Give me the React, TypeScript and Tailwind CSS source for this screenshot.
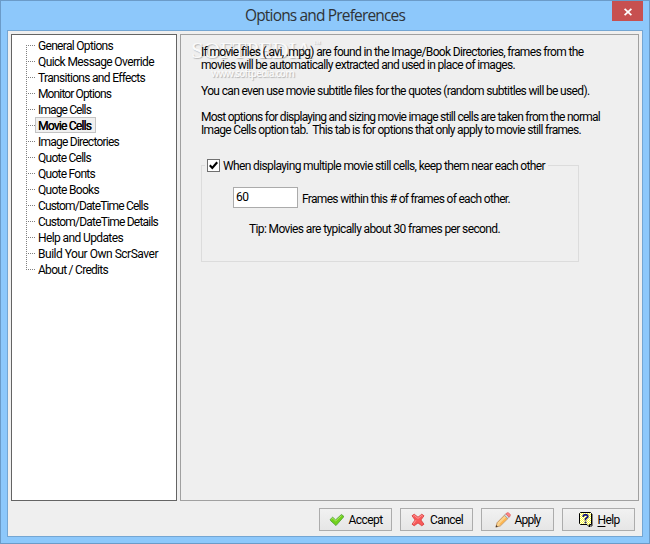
import { ReactNode, useLayoutEffect, useRef, useState } from 'react'

interface FitProps {
  text: string
  width: number
  className?: string
  children?: ReactNode
}

interface Section {
  label: string
  width: number
}

const sections: Section[] = [
  { label: 'General Options', width: 75 },
  { label: 'Quick Message Override', width: 116 },
  { label: 'Transitions and Effects', width: 107 },
  { label: 'Monitor Options', width: 73 },
  { label: 'Image Cells', width: 53 },
  { label: 'Movie Cells', width: 53 },
  { label: 'Image Directories', width: 81 },
  { label: 'Quote Cells', width: 53 },
  { label: 'Quote Fonts', width: 57 },
  { label: 'Quote Books', width: 61 },
  { label: 'Custom/DateTime Cells', width: 110 },
  { label: 'Custom/DateTime Details', width: 120 },
  { label: 'Help and Updates', width: 85 },
  { label: 'Build Your Own ScrSaver', width: 120 },
  { label: 'About / Credits', width: 70 },
]

// tracks a line of text so it takes exactly the given width
function Fit({ text, width, className = '', children }: FitProps) {
  const ref = useRef<HTMLSpanElement>(null)
  const [spacing, setSpacing] = useState(0)

  useLayoutEffect(() => {
    if (!ref.current) return
    const natural = ref.current.getBoundingClientRect().width
    setSpacing((width - natural) / text.length)
  }, [text, width])

  return (
    <span ref={ref} className={`inline-block whitespace-pre ${className}`} style={{ letterSpacing: spacing }}>
      {children ?? text}
    </span>
  )
}

export default function App() {
  const [active, setActive] = useState('Movie Cells')
  const [nearby, setNearby] = useState(true)
  const [frames, setFrames] = useState('60')

  return (
    <div className="flex h-[544px] w-[650px] flex-col border border-[#6b9bc8] bg-[#8dc8fb] px-[6px] pb-[6px] font-['Roboto','Liberation_Sans',sans-serif] text-[12px] text-black">
      <TitleBar />
      <div className="flex flex-1 flex-col border border-[#74a6d3] bg-[#efefef] p-[3px]">
        <div className="flex h-[467px] gap-[3px]">
          <nav className="w-[166px] border border-[#646464] bg-white pl-[14px] pt-[2px]">
            {sections.map((s, i) => (
              <TreeItem
                key={s.label}
                section={s}
                first={i === 0}
                last={i === sections.length - 1}
                active={s.label === active}
                onClick={() => setActive(s.label)}
              />
            ))}
          </nav>

          <main className="relative w-[459px] border border-[#a0a0a0] pl-[20px] pt-[11px]">
            <Watermark />
            <div className="relative leading-[13px]">
              <div className="h-[26px] flex flex-col items-start">
                <Fit width={382} text="If movie files (.avi, .mpg) are found in the Image/Book Directories, frames from the" />
                <Fit width={314} text="movies will be automatically extracted and used in place of images." />
              </div>
              <div className="mt-[13px] h-[13px] flex">
                <Fit width={388} text="You can even use movie subtitle files for the quotes (random subtitles will be used)." />
              </div>
              <div className="mt-[13px] h-[26px] flex flex-col items-start">
                <Fit width={399} text="Most options for displaying and sizing movie image still cells are taken from the normal" />
                <Fit width={380} text="Image Cells option tab.  This tab is for options that only apply to movie still frames." />
              </div>
            </div>

            {/* group box, label sits on the top edge */}
            <fieldset className="mt-[21px] h-[104px] w-[378px] border border-[#dcdcdc]">
              <legend className="ml-[3px] flex h-[15px] items-center pl-[2px] pr-[3px] leading-[15px]">
                <button
                  onClick={() => setNearby(!nearby)}
                  className="mr-[3px] flex h-[13px] w-[13px] items-center justify-center border border-[#707070] bg-white"
                >
                  {nearby && <CheckMark />}
                </button>
                <Fit className="mt-[2px]" width={322} text="When displaying multiple movie still cells, keep them near each other" />
              </legend>
              <div className="ml-[31px] mt-[14px] flex h-[21px] items-center">
                <input
                  value={frames}
                  onChange={(e) => setFrames(e.target.value)}
                  className="h-[21px] w-[65px] border border-[#ababab] bg-white pb-[1px] pl-[2px] tracking-[-0.4px] outline-none"
                />
                <Fit className="ml-[4px] mt-[3px]" width={208} text="Frames within this # of frames of each other." />
              </div>
              <div className="ml-[47px] mt-[13px] leading-[16px]">
                <Fit width={251} text="Tip: Movies are typically about 30 frames per second." />
              </div>
            </fieldset>
          </main>
        </div>

        <footer className="mt-[7px] flex justify-end gap-[8px] pr-[4px]">
          <ActionButton icon={<AcceptIcon />} text="Accept" width={34} gap="ml-[4px]" />
          <ActionButton icon={<CancelIcon />} text="Cancel" width={33} gap="ml-[4px]" />
          <ActionButton icon={<PencilIcon />} text="Apply" width={26} gap="ml-[4px]" />
          <ActionButton icon={<HelpIcon />} text="Help" width={22} gap="ml-[4px]">
            <span className="underline underline-offset-2">H</span>elp
          </ActionButton>
        </footer>
      </div>
    </div>
  )
}

function TitleBar() {
  return (
    <header className="relative flex h-[29px] justify-center font-['Open_Sans',sans-serif] text-[15.5px] leading-[29px] text-[#2f3337]">
      <Fit width={160} text="Options and Preferences" />
      <button className="absolute right-0 top-0 flex h-[20px] w-[31px] items-center justify-center bg-[#c75050]">
        <svg className="mt-[2px] h-[8px] w-[8px]" viewBox="0 0 8 8" fill="none" stroke="white" strokeWidth="1.7">
          <path d="M.6 .8 7.4 7.2M7.4 .8 .6 7.2" />
        </svg>
      </button>
    </header>
  )
}

interface TreeItemProps {
  section: Section
  first: boolean
  last: boolean
  active: boolean
  onClick: () => void
}

function TreeItem({ section, first, last, active, onClick }: TreeItemProps) {
  return (
    <button onClick={onClick} className="flex h-[16px] items-center text-left">
      <svg className="h-[16px] w-[9px] shrink-0" viewBox="0 0 9 16" stroke="#808080" strokeDasharray="1 1" shapeRendering="crispEdges">
        <path d={`M.5 ${first ? 8 : 0}V${last ? 9 : 16}`} />
        <path d="M0 8.5H9" />
      </svg>
      <span
        className={`flex h-[16px] items-center border pl-[2px] pr-[4px] leading-[14px] ${active ? 'border-[#c4c4c4] bg-[#f0f0f0] [text-shadow:0.35px_0_0_black]' : 'border-transparent'}`}
      >
        <Fit className="mt-[2px]" width={section.width} text={section.label} />
      </span>
    </button>
  )
}

interface ActionButtonProps {
  icon: ReactNode
  text: string
  width: number
  gap: string
  children?: ReactNode
}

function ActionButton({ icon, text, width, gap, children }: ActionButtonProps) {
  return (
    <button className="flex h-[23px] w-[73px] items-center justify-center border border-[#acacac] bg-linear-to-b from-[#f1f1f1] to-[#e6e6e6] leading-[15px]">
      {icon}
      <Fit className={`${gap} mt-[2px]`} width={width} text={text}>{children}</Fit>
    </button>
  )
}

function Watermark() {
  return (
    <div className="pointer-events-none absolute left-[10px] top-[2px] text-[#fafafa] [text-shadow:1px_1px_1px_#b4b4b4]">
      <div className="flex h-[27px] items-start font-['Liberation_Serif',serif] text-[23px] leading-[27px]">
        <Fit width={121} text="SOFTPEDIA" />
        <span className="ml-[1px] mt-[1px] text-[8px] leading-[12px]">™</span>
      </div>
      <div className="ml-[20px] font-['Open_Sans',sans-serif] text-[10px] font-semibold leading-[18px]">
        <Fit width={83} text="www.softpedia.com" />
      </div>
    </div>
  )
}

function CheckMark() {
  return (
    <svg className="h-[11px] w-[11px]" viewBox="0 0 11 11">
      <path fill="none" stroke="black" strokeWidth="2.1" d="M1.8 5.2 4.3 7.9 9.2 2.2" />
    </svg>
  )
}

function AcceptIcon() {
  return (
    <svg className="h-[16px] w-[16px]" viewBox="0 0 16 16">
      <path fill="#72d11b" stroke="#4d9e35" strokeWidth=".8" strokeLinejoin="round" d="M1.2 7.4 3.7 5.2 6.6 7.9 12.4 2.5 14.6 4.1 14.4 5.2 7 13.6 1.6 8.7Z" />
      <path fill="none" stroke="#b6ee72" strokeWidth=".8" d="M2.4 7.3 3.8 6.2 6.6 9 12.5 3.6" />
    </svg>
  )
}

function CancelIcon() {
  return (
    <svg className="h-[16px] w-[16px]" viewBox="0 0 16 16">
      <path fill="#f85a5a" stroke="#d53838" strokeWidth=".8" strokeLinejoin="round" d="M2 3.8 4.2 2.2 8 5.2 11.8 2.2 14 3.8 10.9 8 14 12.2 11.8 13.8 8 10.9 4.2 13.8 2 12.2 5.1 8Z" />
      <path fill="none" stroke="#ffa0a0" strokeWidth=".9" d="M3.2 4.2 4.3 3.4 8 6.4 11.7 3.4 12.8 4.2M6 8.2 3.3 11.8" />
    </svg>
  )
}

function PencilIcon() {
  return (
    <svg className="h-[16px] w-[16px]" viewBox="0 0 16 16" strokeLinejoin="round" strokeWidth=".8">
      <path fill="#fbd38d" stroke="#b7834c" d="M.9 15.1 2.2 10.6 9.6 3.1 13 6.4 5.5 13.8Z" />
      <path fill="none" stroke="#fdb54f" strokeWidth="1.5" d="M4.8 12.6 12 5.6" />
      <path fill="#d5d8dd" stroke="#9b9b9b" d="M9.4 3.3 10.9 1.8 14.2 5.1 12.7 6.6Z" />
      <path fill="#ff8585" stroke="#e26666" d="M10.9 1.8 12.2.8H13.5L15.2 2.6V4L14.2 5.1Z" />
      <path fill="#443a33" d="M.7 15.3 1.3 13.1 2.9 14.7Z" />
    </svg>
  )
}

function HelpIcon() {
  return (
    <svg className="h-[16px] w-[16px]" viewBox="0 0 16 16">
      <defs>
        <pattern id="dither" width="2" height="2" patternUnits="userSpaceOnUse">
          <path fill="#fff" d="M0 0H2V2H0Z" />
          <path fill="#ffff35" d="M0 0H1V1H0ZM1 1H2V2H1Z" />
        </pattern>
      </defs>
      <path fill="none" stroke="#222" d="M14 2V14H11" />
      <path fill="url(#dither)" stroke="black" d="M2.5.5H12.5L13.5 1.5V12.5H11.5V15L9 12.5H2.5L1.5 11.5V1.5Z" />
      <path fill="none" stroke="#16167e" strokeWidth="1.7" d="M5.3 5V3.8L6.2 2.9H8.8L9.7 3.8V5L7.5 6.9V8.4" />
      <path fill="#16167e" d="M6.6 9.6H8.5V11.3H6.6Z" />
    </svg>
  )
}
